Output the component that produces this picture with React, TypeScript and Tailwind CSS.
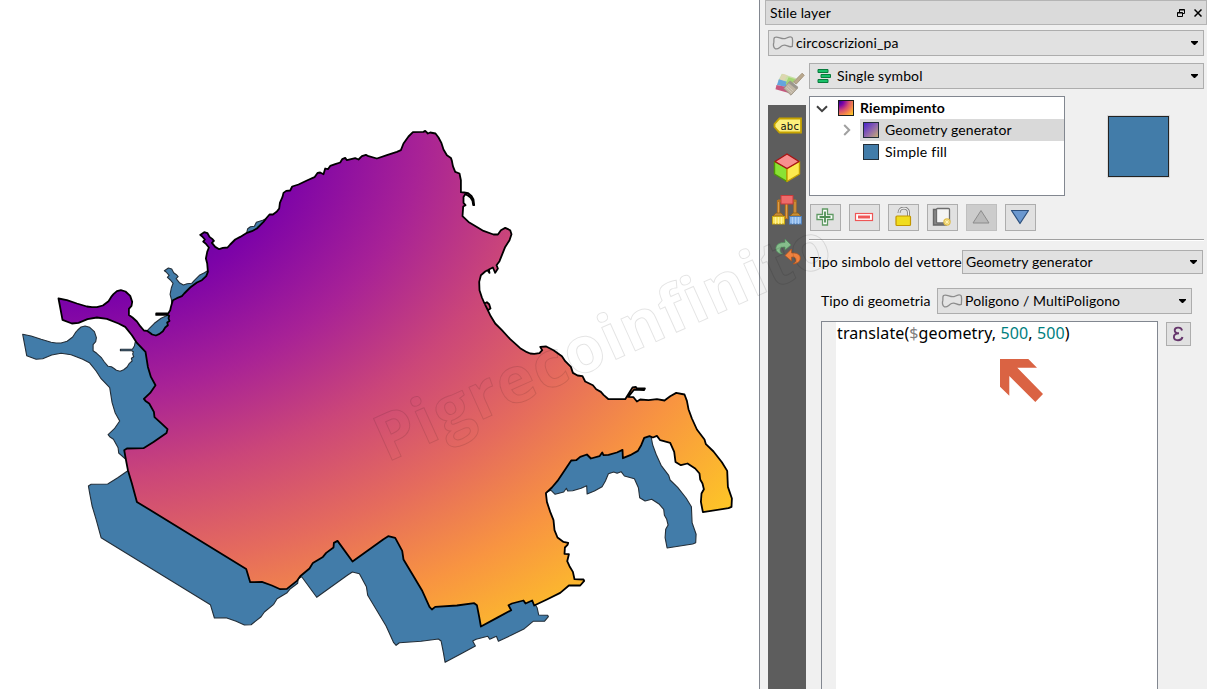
import type { ReactNode } from "react";

type Tile = { x: number; y: number; pts: string };

// The district outline, digitised per map tile at three units per pixel.
const OUTLINE: Tile[] = [
  {
    x: 0,
    y: 220,
    pts: "175,235 200,240 230,250 260,259 275,261 290,261 308,256 325,243 333,230 340,222 350,213 362,210 376,214 390,227 396,245 394,257 386,266 386,284 397,292 410,304 420,318 431,331 441,332 448,337 456,343 467,346 478,341 488,333 495,322 503,315 501,307 508,302 505,294 507,287 502,284 468,284 468,280 504,280 510,270 512,260 515,250 518,240 530,234 545,228 552,220 570,202 590,187 605,180 618,168 623,155 621,130 617,115 621,95 626,82 618,72 609,64 614,58 605,48 600,44 612,36 622,39 628,50 636,56 641,62 635,68 645,80 657,87 668,83 682,82",
  },
  {
    x: 230,
    y: 110,
    pts: "0,403 15,388 30,380 48,369 65,363 80,355 100,335 110,322 118,313 128,313 140,304 147,295 149,278 157,260 160,248 168,242 180,241 186,229 205,223 230,211 253,201 262,188 270,187 280,192 285,175 293,177 300,167 315,162 330,157 336,147 345,143 350,150 375,144 385,148 395,138 407,134 415,138 440,145 470,135 500,125 512,120 520,100 535,79 548,66 580,65 585,62 593,70 600,67 616,70 625,82 634,99 640,118 650,135 662,143 665,152 668,168 675,185 688,190 692,210 692,246 702,247 714,249 724,257 730,268 732,285 729,285 727,272 721,262 713,256 705,252 700,260 700,278 706,285 699,289 697,318 715,335 740,350 760,362 790,373 803,373 812,360 825,353 840,360 844,372 838,390 825,410 815,435 808,453 799,465 803,475 795,488 788,472 776,478 778,488 772,480 765,484 752,495 747,515 748,540 755,562 763,580 770,576 777,582 781,595 773,600 765,584 780,615 795,640 815,660 840,687 870,714 890,726",
  },
  {
    x: 470,
    y: 330,
    pts: "180,70 192,71 208,69 216,60 210,50 228,49 250,60 275,78 285,93 302,110 308,128 322,136 337,138 345,154 368,165 378,177 392,185 400,194 415,207 465,207 487,172 497,170 500,175 524,175 521,180 492,178 474,200 490,201 500,214 510,208 535,210 560,207 583,211 600,198 618,188 643,193 650,212 655,237 665,265 680,298 703,328 707,342 730,364 755,396 771,422 773,470 785,505 784,530 775,534 698,546 692,515 694,490 701,477 697,460 690,448 688,430 675,415 652,400 632,405 616,395 612,365 600,338 570,330 560,317 548,322 538,318 522,323 513,345 503,362 480,375 458,384 457,359 440,367 415,374 400,375 396,367 388,378 362,385 350,373 330,380 318,390 303,391 285,418 262,452 245,472 227,489 230,515 240,545 250,570 253,600 262,622 280,635",
  },
  {
    x: 330,
    y: 480,
    pts: "714,188 712,194 704,202 703,221 716,222 711,243 718,258 728,275 733,297 760,298 762,302 750,316 716,316 690,338 650,358 612,376 606,361 586,370 580,361 545,370 535,375 543,390 500,413 452,439 447,410 440,375 432,369 380,376 315,380 305,388 298,380 275,330 245,280 220,238 216,212 195,173 174,168 160,177 67,244 22,182",
  },
  {
    x: 80,
    y: 450,
    pts: "761,278 760,292 738,308 728,320 698,338 688,355 660,378 650,392 620,416 600,417 575,406 545,395 510,396 498,356 170,155 155,100",
  },
  {
    x: 0,
    y: 220,
    pts: "383,750 376,712 372,690 380,685 430,684 460,665 499,638 502,627 485,611 463,591 461,575 447,550 436,542 431,536 450,518 466,495 452,470 443,440 436,395 410,368 395,345 375,320 355,310 320,296 290,292 262,297 235,308 215,310 187,299",
  },
];

const outlinePoints = OUTLINE.map((t) =>
  t.pts
    .split(" ")
    .map((p) => {
      const [x, y] = p.split(",").map(Number);
      return `${(t.x + x / 3 + 0.2).toFixed(1)},${(t.y + y / 3 + 0.2).toFixed(1)}`;
    })
    .join(" "),
).join(" ");

function MapCanvas() {
  return (
    <svg viewBox="0 0 759 689" className="block h-[689px] w-[759px] shrink-0 bg-white">
      <defs>
        <radialGradient id="plasma" cx="0" cy="0" r="1.414" fx="0" fy="0">
          <stop offset="0" stopColor="#0d0887" />
          <stop offset="0.13" stopColor="#4b03a1" />
          <stop offset="0.25" stopColor="#7d03a8" />
          <stop offset="0.38" stopColor="#a82296" />
          <stop offset="0.5" stopColor="#cb4679" />
          <stop offset="0.63" stopColor="#e56b5d" />
          <stop offset="0.75" stopColor="#f89441" />
          <stop offset="0.88" stopColor="#fdc328" />
          <stop offset="1" stopColor="#f0f921" />
        </radialGradient>
      </defs>
      <polygon points={outlinePoints} transform="translate(-35.8 35.8)" fill="#427ca9" stroke="#232e38" strokeWidth="1.1" strokeLinejoin="round" />
      <polygon points={outlinePoints} fill="url(#plasma)" stroke="#000" strokeWidth="1.8" strokeLinejoin="round" />
    </svg>
  );
}

function Watermark() {
  return (
    <svg viewBox="0 0 1207 689" className="pointer-events-none absolute inset-0 h-[689px] w-[1207px]">
      <text
        transform="translate(387 462.500) rotate(-24.2)"
        textLength="492"
        fontSize="64"
        fontWeight="700"
        fontFamily="'Open Sans', sans-serif"
        fill="none"
        stroke="#000"
        strokeOpacity="0.11"
        strokeWidth="1"
      >
        Pigrecoinfinito
      </text>
    </svg>
  );
}

function PolygonIcon() {
  return (
    <svg viewBox="0 0 22 16" className="h-4 w-[22px] shrink-0">
      <path
        d="M2.500 2.500C6 .5 10 5.500 14 3.200C17 1.500 19.500 1.200 20.300 3C21 6 20.500 9.500 20.300 11.500C16 13 14.500 8.500 10.500 10.500C7 12.500 6.500 14.500 3.500 13.800C1 13 1.300 9 1.800 7.500C2.200 6 1.300 4 2.500 2.500Z"
        fill="#e4e4e4"
        stroke="#8c8c8c"
        strokeWidth="1.3"
      />
    </svg>
  );
}

function Combo({ className, children }: { className: string; children: ReactNode }) {
  return (
    <div className={`flex shrink-0 items-center border border-[#adadad] bg-[#e1e1e1] ${className}`}>
      {children}
      <svg viewBox="0 0 7 4" className="mr-[5px] ml-auto h-1 w-[7px]">
        <path d="M0 0H7V1L4 4H3L0 1Z" />
      </svg>
    </div>
  );
}

function ToolButton({ disabled, children }: { disabled?: boolean; children: ReactNode }) {
  return (
    <button className={`flex h-[27px] w-[31px] items-center justify-center border pr-px pb-px ${disabled ? "border-[#bfbfbf] bg-[#cccccc]" : "border-[#adadad] bg-[#e1e1e1]"}`}>
      <svg viewBox="0 0 20 20" className="h-5 w-5">
        {children}
      </svg>
    </button>
  );
}

function SymbologyTab() {
  return (
    <svg viewBox="0 0 32 26" className="h-[26px] w-8">
      <path d="M7 1.500L22 6L17 14L3 9Z" fill="#c9dfa6" />
      <path d="M8 1.500L13 3L9 9L4 8Z" fill="#ddd6b0" />
      <path d="M4 7L13 10L11 15L2 13Z" fill="#64a5dd" />
      <path d="M14 5L21 7L16 13L11 12Z" fill="#a3d673" />
      <path d="M1.500 13L12 15L17 22L.5 17.500Z" fill="#c5577e" />
      <path d="M28 .8L30.200 3L22 12L19 10Z" fill="#b9a88d" stroke="#9a896f" strokeWidth=".8" />
      <path d="M15 9.500L23.500 16L16.500 23.500L9 16.500Z" fill="#c0b5a3" stroke="#94897a" strokeWidth=".8" />
      <path d="M16 8.500L24 15L22 17.500L14 11Z" fill="#9b968d" />
      <path d="M13 14L19 19.500M11.500 15.500L17.500 21" stroke="#d8d0c4" strokeWidth=".8" />
    </svg>
  );
}

function LabelsTab() {
  return (
    <svg viewBox="0 0 30 18" className="h-[18px] w-[30px]">
      <path d="M6.500 1.500H28V15.500H6.500L1.500 10V7Z" fill="#fcef7c" stroke="#c6a300" strokeWidth="1.8" />
      <text x="7.500" y="12.500" fontSize="10" fontFamily="'DejaVu Sans', sans-serif" textLength="18.500" fill="#111">
        abc
      </text>
    </svg>
  );
}

function CubeTab() {
  return (
    <svg viewBox="0 0 28 30" className="h-[30px] w-7">
      <path d="M1.500 8.500L14 15.500V28.500L1.500 21Z" fill="#8ae234" stroke="#4e9a06" strokeWidth="1.400" strokeLinejoin="round" />
      <path d="M26.500 8.500L14 15.500V28.500L26.500 21Z" fill="#fce94f" stroke="#c4a000" strokeWidth="1.400" strokeLinejoin="round" />
      <path d="M14 1L26 8.500L14 15.500L2 8.500Z" fill="#f78f8f" stroke="#a81414" strokeWidth="1.400" strokeLinejoin="round" />
    </svg>
  );
}

function BrushesTab() {
  return (
    <svg viewBox="0 0 32 32" className="h-8 w-8">
      <path d="M15.500 10V25M7.500 6V20M24 6V20M7 7H25" stroke="#b87420" strokeWidth="3.200" fill="none" />
      <path d="M15.500 10V24M7.500 8V20M24 8V20" stroke="#dda04c" strokeWidth="1" fill="none" />
      <rect x="10" y="1.500" width="12" height="8.500" fill="#ee6b6b" stroke="#c83a3a" />
      <path d="M2 22L5 19H10L13 22Z" fill="#c88f3a" stroke="#96610f" strokeWidth=".8" />
      <rect x="1.500" y="22.500" width="12" height="7.500" fill="#fbe660" stroke="#c9a512" />
      <path d="M19 22L22 19H27L30 22Z" fill="#c88f3a" stroke="#96610f" strokeWidth=".8" />
      <rect x="18.500" y="22.500" width="12" height="7.500" fill="#8db8ea" stroke="#4f7fb8" />
      <path d="M4.500 23V30M7.500 23V30M10.500 23V30" stroke="#fff6a8" strokeWidth=".8" />
      <path d="M21.500 23V30M24.500 23V30M27.500 23V30" stroke="#b9d6f6" strokeWidth=".8" />
    </svg>
  );
}

function HistoryTab() {
  return (
    <svg viewBox="0 0 28 28" className="h-7 w-7">
      <path d="M8.500 16C2.500 15.500 .8 11 2.500 8C4 5 7.500 4.500 11 4.500V1L17 7L11 12V9C8 9 6 9.500 6 12C6 14 7 15 8.500 16Z" fill="#86bd8c" stroke="#4f8f5c" strokeWidth=".7" />
      <path d="M19 26C25 25.500 27 22 26 18.500C25 15.500 21 14.500 17.500 15V11L11 17.500L17.500 23V19C20 18.500 22 19.500 22 22C22 24 20.500 25 19 26Z" fill="#ee8240" stroke="#b5531a" strokeWidth=".7" />
    </svg>
  );
}

function Sidebar() {
  return (
    <div className="flex w-[38px] shrink-0 flex-col">
      <div className="flex h-[42px] items-center pt-0.5 pl-[7px]">
        <SymbologyTab />
      </div>
      <div className="flex flex-1 flex-col items-center bg-[#5d5d5d]">
        <div className="flex h-[42px] items-center pl-px">
          <LabelsTab />
        </div>
        <div className="flex h-[42px] items-center">
          <CubeTab />
        </div>
        <div className="flex h-[42px] items-center">
          <BrushesTab />
        </div>
        <div className="flex h-[42px] items-center pl-0.5">
          <HistoryTab />
        </div>
      </div>
    </div>
  );
}

function SymbolTree() {
  return (
    <div className="h-[100px] w-[256px] border border-[#828790] bg-white">
      <div className="flex h-[22px] items-center pl-[6px]">
        <svg viewBox="0 0 12 8" className="mt-0.5 h-2 w-3">
          <path d="M1 1.200L6 6.200L11 1.200" fill="none" stroke="#404040" strokeWidth="2" />
        </svg>
        <svg viewBox="0 0 16 16" className="ml-[10px] h-4 w-4">
          <defs>
            <radialGradient id="swatchWarm" cx="0" cy="0" r="1.414" fx="0" fy="0">
              <stop offset="0" stopColor="#1a0890" />
              <stop offset="0.25" stopColor="#7d03a8" />
              <stop offset="0.5" stopColor="#d64e70" />
              <stop offset="0.75" stopColor="#fb9440" />
              <stop offset="1" stopColor="#f8e025" />
            </radialGradient>
          </defs>
          <rect x=".5" y=".5" width="15" height="15" fill="url(#swatchWarm)" stroke="#1c1c1c" />
        </svg>
        <span className="ml-[6px] text-[14px] font-bold tracking-[0.15px]">Riempimento</span>
      </div>
      <div className="flex h-[22px] items-center pl-[33px]">
        <svg viewBox="0 0 8 12" className="h-3 w-2">
          <path d="M1.200 1L6.200 6L1.200 11" fill="none" stroke="#a0a0a0" strokeWidth="2" />
        </svg>
        <div className="ml-[9px] flex h-[22px] flex-1 items-center bg-[#d9d9d9] pl-[3px]">
          <svg viewBox="0 0 16 16" className="h-4 w-4">
            <defs>
              <linearGradient id="swatchCool" x1="0" y1="0" x2="1" y2="1">
                <stop offset="0" stopColor="#4420cc" />
                <stop offset="0.5" stopColor="#8d63b0" />
                <stop offset="1" stopColor="#c9b070" />
              </linearGradient>
            </defs>
            <rect x=".5" y=".5" width="15" height="15" fill="url(#swatchCool)" stroke="#222d38" />
          </svg>
          <span className="ml-[6px]">Geometry generator</span>
        </div>
      </div>
      <div className="flex h-[22px] items-center pl-[53px]">
        <div className="h-4 w-4 border border-[#232e38] bg-[#427ca9]" />
        <span className="ml-[6px] tracking-[0.25px]">Simple fill</span>
      </div>
    </div>
  );
}

function Toolbar() {
  return (
    <div className="mt-2 ml-px flex gap-2">
      <ToolButton>
        <path d="M7.500 2H12.500V7.500H18V12.500H12.500V18H7.500V12.500H2V7.500H7.500Z" fill="#fff" stroke="#5f9a63" strokeWidth="1.300" />
        <path d="M10 4.500V15.500M4.500 10H15.500" stroke="#4f8f55" strokeWidth="1.800" />
      </ToolButton>
      <ToolButton>
        <rect x="1.500" y="6.500" width="17" height="7" fill="#fff" stroke="#ef5656" strokeWidth="1.200" />
        <path d="M4 10H16" stroke="#ef5656" strokeWidth="3" />
      </ToolButton>
      <ToolButton>
        <path d="M6 6C6 -.5 15.500 -.5 15.500 5.500V9" fill="none" stroke="#7f7f7f" strokeWidth="3" />
        <path d="M6 6C6 -.5 15.500 -.5 15.500 5.500V9" fill="none" stroke="#efefef" strokeWidth="1.200" />
        <rect x="3" y="9" width="14.500" height="9.500" rx="1" fill="#f0dc1e" stroke="#c29600" strokeWidth="1.200" />
      </ToolButton>
      <ToolButton>
        <path d="M4 2.500H1.500V18H15" fill="#888" stroke="#666" strokeWidth="1.400" />
        <rect x="4.500" y="1.500" width="13" height="14.500" rx="1" fill="#f4f4f4" stroke="#6c6c6c" strokeWidth="1.300" />
        <circle cx="15" cy="15" r="3.700" fill="#e2c04d" />
        <path d="M15 12.300V17.700M12.300 15H17.700M13.200 13.200L16.800 16.800M16.800 13.200L13.200 16.800" stroke="#fff4b8" strokeWidth=".9" />
      </ToolButton>
      <ToolButton disabled>
        <path d="M10 3.500L18 16H2Z" fill="#b9b9b9" stroke="#8b8b8b" strokeLinejoin="round" />
      </ToolButton>
      <ToolButton>
        <path d="M1.500 3.500H18.500L10 16.500Z" fill="#6b98cf" stroke="#2c4f7c" strokeWidth="1.200" strokeLinejoin="round" />
      </ToolButton>
    </div>
  );
}

function ExpressionEditor() {
  return (
    <div className="mt-[7px] ml-3 flex flex-1">
      <div className="flex w-[337px] border border-b-0 border-[#828790] bg-white">
        <div className="w-[14px] bg-[#f0f0f0]" />
        <div className="flex flex-col pl-[1px]">
          <code className="font-['Noto_Sans',sans-serif] text-[16px] leading-[22px] tracking-[0.1px] whitespace-pre">
            translate(<span className="text-[#808080]">$</span>geometry, <span className="text-[#008080]">500</span>, <span className="text-[#008080]">500</span>)
          </code>
          <svg viewBox="0 0 44 44" className="mt-[15px] ml-[163px] h-11 w-11">
            <path d="M0 0H28.300L37 8.700H17.300L43 35L35.300 43L9.300 17V36.700L0 27.700Z" fill="#da6343" />
          </svg>
        </div>
      </div>
      <button className="mt-px ml-2 flex h-6 w-[25px] items-center justify-center border border-[#adadad] bg-[#e1e1e1] pr-0.5">
        <svg viewBox="0 0 12 16" className="h-4 w-3">
          <path d="M10 4.500C9.500 1 3.200 .5 2.700 4C2.500 6.500 4.500 7.300 7 7.300C4 7.300 1.700 8.500 1.900 11.200C2.200 15 9.500 15.500 10.500 11" fill="none" stroke="#65356b" strokeWidth="1.900" />
        </svg>
      </button>
    </div>
  );
}

export default function App() {
  return (
    <div className="relative flex h-[689px] w-[1207px] overflow-hidden bg-[#f0f0f0] font-['Lato','Noto_Sans',sans-serif] text-[14px] leading-[18px] tracking-[0.12px] whitespace-nowrap text-black">
      <MapCanvas />
      <aside className="flex flex-1 flex-col border-l border-[#828790]">
        <header className="mr-0 ml-[5px] flex h-[25px] shrink-0 items-center border border-[#b4b4b4] bg-[#dadada] pl-1">
          <span>Stile layer</span>
          <svg viewBox="0 0 8 8" className="ml-auto h-2 w-2">
            <path d="M2.500 3V.5H7.500V4.500H6M2.500 1H7.500M.5 3.500H5.500V7.500H.5ZM.5 4H5.500" fill="none" stroke="#000" />
          </svg>
          <svg viewBox="0 0 8 8" className="mr-1 ml-[9px] h-2 w-2">
            <path d="M.5 .5L7.500 7.500M7.500 .5L.5 7.500" stroke="#000" strokeWidth="1.500" />
          </svg>
        </header>
        <Combo className="mt-[5px] ml-2 h-[26px] w-[436px] pl-[3px]">
          <PolygonIcon />
          <span className="ml-[2px]">circoscrizioni_pa</span>
        </Combo>
        <div className="ml-2 flex flex-1 pt-[7px]">
          <Sidebar />
          <div className="ml-[3px] flex flex-1 flex-col">
            <Combo className="h-[26px] w-[395px] pl-[7px]">
              <svg viewBox="0 0 15 14" className="h-[14px] w-[15px]">
                <path d="M1 .5H11V3.500H1ZM4 5.500H13.500V8.500H4ZM1 10.500H11V13.500H1Z" fill="#19c068" stroke="#087a3c" />
              </svg>
              <span className="ml-[5px]">Single symbol</span>
            </Combo>
            <div className="mt-[7px] flex">
              <SymbolTree />
              <div className="mt-[19px] ml-[42px] h-[63px] w-[63px] border border-[#dadada]">
                <div className="h-[61px] w-[61px] border border-[#232323] bg-[#427ca9]" />
              </div>
            </div>
            <Toolbar />
            <div className="mt-2 h-[2px] w-[395px] shrink-0 border-t border-[#a0a0a0] bg-white" />
            <div className="mt-[9px] flex items-center">
              <span className="w-[153px] pl-px">Tipo simbolo del vettore</span>
              <Combo className="h-6 w-[241px] pl-[3px]">
                <span>Geometry generator</span>
              </Combo>
            </div>
            <div className="mt-[14px] ml-3 flex items-center">
              <span className="w-[116px]">Tipo di geometria</span>
              <Combo className="h-[26px] w-[255px] pl-[3px]">
                <PolygonIcon />
                <span className="ml-[2px] tracking-[0.1px]">Poligono / MultiPoligono</span>
              </Combo>
            </div>
            <ExpressionEditor />
          </div>
        </div>
      </aside>
      <Watermark />
    </div>
  );
}
